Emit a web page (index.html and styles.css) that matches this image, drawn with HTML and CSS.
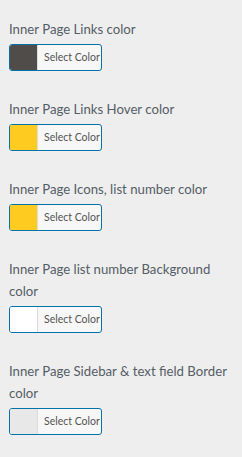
FILE: index.html
```html
<!DOCTYPE html>
<html lang="en">
<head>
    <meta charset="UTF-8">
    <meta name="viewport" content="width=device-width, initial-scale=1.0">
    <title>Inner Page Colors</title>
    <link rel="stylesheet" href="styles.css">
</head>
<body>
    <ul class="controls">
        <li class="control">
            <span class="control-title">Inner Page Links color</span>
            <button type="button" class="color-result">
                <span class="swatch" style="background-color: #4f4c4a;"></span>
                <span class="color-label">Select Color</span>
            </button>
        </li>
        <li class="control">
            <span class="control-title">Inner Page Links Hover color</span>
            <button type="button" class="color-result">
                <span class="swatch" style="background-color: #fecb21;"></span>
                <span class="color-label">Select Color</span>
            </button>
        </li>
        <li class="control">
            <span class="control-title">Inner Page Icons, list number color</span>
            <button type="button" class="color-result">
                <span class="swatch" style="background-color: #fecb21;"></span>
                <span class="color-label">Select Color</span>
            </button>
        </li>
        <li class="control">
            <span class="control-title">Inner Page list number Background color</span>
            <button type="button" class="color-result">
                <span class="swatch" style="background-color: #ffffff;"></span>
                <span class="color-label">Select Color</span>
            </button>
        </li>
        <li class="control">
            <span class="control-title">Inner Page Sidebar &amp; text field Border color</span>
            <button type="button" class="color-result">
                <span class="swatch" style="background-color: #e9e8e8;"></span>
                <span class="color-label">Select Color</span>
            </button>
        </li>
    </ul>
</body>
</html>
```

FILE: styles.css
```css
body {
    margin: 0;
    padding: 18px 9px 0;
    background-color: #eeeeee;
    font-family: Lato, "Open Sans", Arial, sans-serif;
}
.controls {
    list-style: none;
    margin: 0;
    padding: 0;
}
.control {
    margin-bottom: 27px;
}
.control-title {
    display: block;
    font-size: 13.2px;
    line-height: 22px;
    color: #555d66;
    margin-bottom: 4px;
}
.color-result {
    display: flex;
    align-items: stretch;
    width: 93px;
    height: 27px;
    padding: 0;
    margin: 0;
    border: 1px solid #0073aa;
    border-radius: 3px;
    background-color: #f7f7f7;
    overflow: hidden;
    cursor: pointer;
    font-family: inherit;
}
.swatch {
    width: 27px;
    border-right: 1px solid #dcdcdc;
}
.color-label {
    flex: 1;
    padding-left: 6px;
    font-size: 10.5px;
    line-height: 25px;
    color: #555555;
    text-align: left;
    white-space: nowrap;
}
```
